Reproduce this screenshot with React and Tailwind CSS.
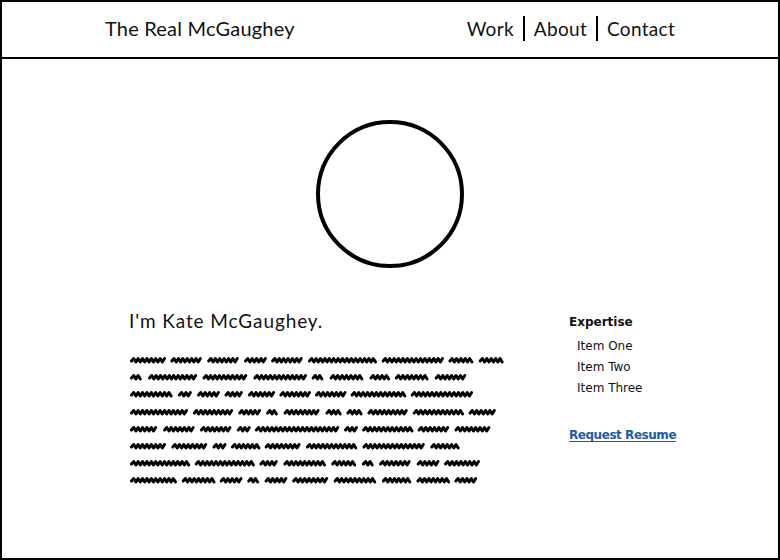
import React from 'react';

// sketchy "lorem" rows: total width, then relative word lengths
const rows = [
  [372, [10, 9, 9, 6, 9, 20, 18, 7, 7]],
  [334, [3, 13, 12, 14, 3, 9, 5, 9, 8]],
  [342, [10, 3, 5, 4, 6, 7, 7, 13, 15]],
  [363, [16, 11, 6, 3, 10, 4, 4, 11, 14, 7]],
  [358, [7, 8, 8, 3, 22, 3, 13, 8, 9]],
  [327, [9, 9, 3, 7, 9, 13, 16, 7]],
  [348, [17, 17, 5, 12, 7, 3, 9, 6, 10]],
  [345, [13, 9, 6, 3, 6, 10, 12, 8, 9, 6]],
];

function Squiggle({ width, words }) {
  const gap = 7;
  const total = words.reduce((a, b) => a + b, 0);
  const scale = (width - gap * (words.length - 1)) / total;
  let x = 1.5;
  const paths = words.map((w, i) => {
    const len = w * scale;
    let d = `M${x.toFixed(1)},9`;
    let up = true;
    for (let p = x + 2.2; p < x + len; p += 2.2) {
      d += ` L${p.toFixed(1)},${up ? 6.5 : 10}`;
      up = !up;
    }
    x += len + gap;
    return <path key={i} d={d} />;
  });
  return (
    <svg width={width + 3} height="16" className="block">
      <g fill="none" stroke="#000" strokeWidth="3" strokeLinecap="round" strokeLinejoin="round">
        {paths}
      </g>
    </svg>
  );
}

function NavLink({ children }) {
  return <span className="leading-none">{children}</span>;
}

export default function App() {
  return (
    <div className="w-[780px] h-[560px] bg-white border-2 border-black flex flex-col font-['Lato',sans-serif] text-[#111]">
      <header className="h-[57px] border-b-2 border-black flex items-center justify-between pl-[103px] pr-[103px] pb-[3px] shrink-0">
        <div className="text-[20px] tracking-[0.2px]">The Real McGaughey</div>
        <nav className="flex items-center text-[19px] tracking-[0.3px]">
          <NavLink>Work</NavLink>
          <span className="w-[2px] h-[25px] bg-black mx-[9px]" />
          <NavLink>About</NavLink>
          <span className="w-[2px] h-[25px] bg-black mx-[9px]" />
          <NavLink>Contact</NavLink>
        </nav>
      </header>

      <main className="flex flex-col items-center">
        <div className="mt-[61px] w-[148px] h-[148px] rounded-full border-[4px] border-black" />

        <div className="mt-[41px] w-full flex pl-[127px]">
          <div className="w-[440px]">
            <h1 className="text-[19px] leading-[24px] tracking-[0.9px]">I'm Kate McGaughey.</h1>
            <div className="mt-[19px] ml-[1px] flex flex-col gap-[1.2px]">
              {rows.map(([w, words], i) => (
                <Squiggle key={i} width={w} words={words} />
              ))}
            </div>
          </div>
          <div className="font-['DejaVu_Sans',sans-serif] text-[12px] pt-[4px]">
            <div className="font-bold">Expertise</div>
            <ul className="mt-[6px] ml-[8px] flex flex-col gap-[3px]">
              <li>Item One</li>
              <li>Item Two</li>
              <li>Item Three</li>
            </ul>
            <a className="block mt-[29px] font-bold text-[#1f5c9e] tracking-[-0.45px] underline underline-offset-2">Request Resume</a>
          </div>
        </div>
      </main>
    </div>
  );
}
